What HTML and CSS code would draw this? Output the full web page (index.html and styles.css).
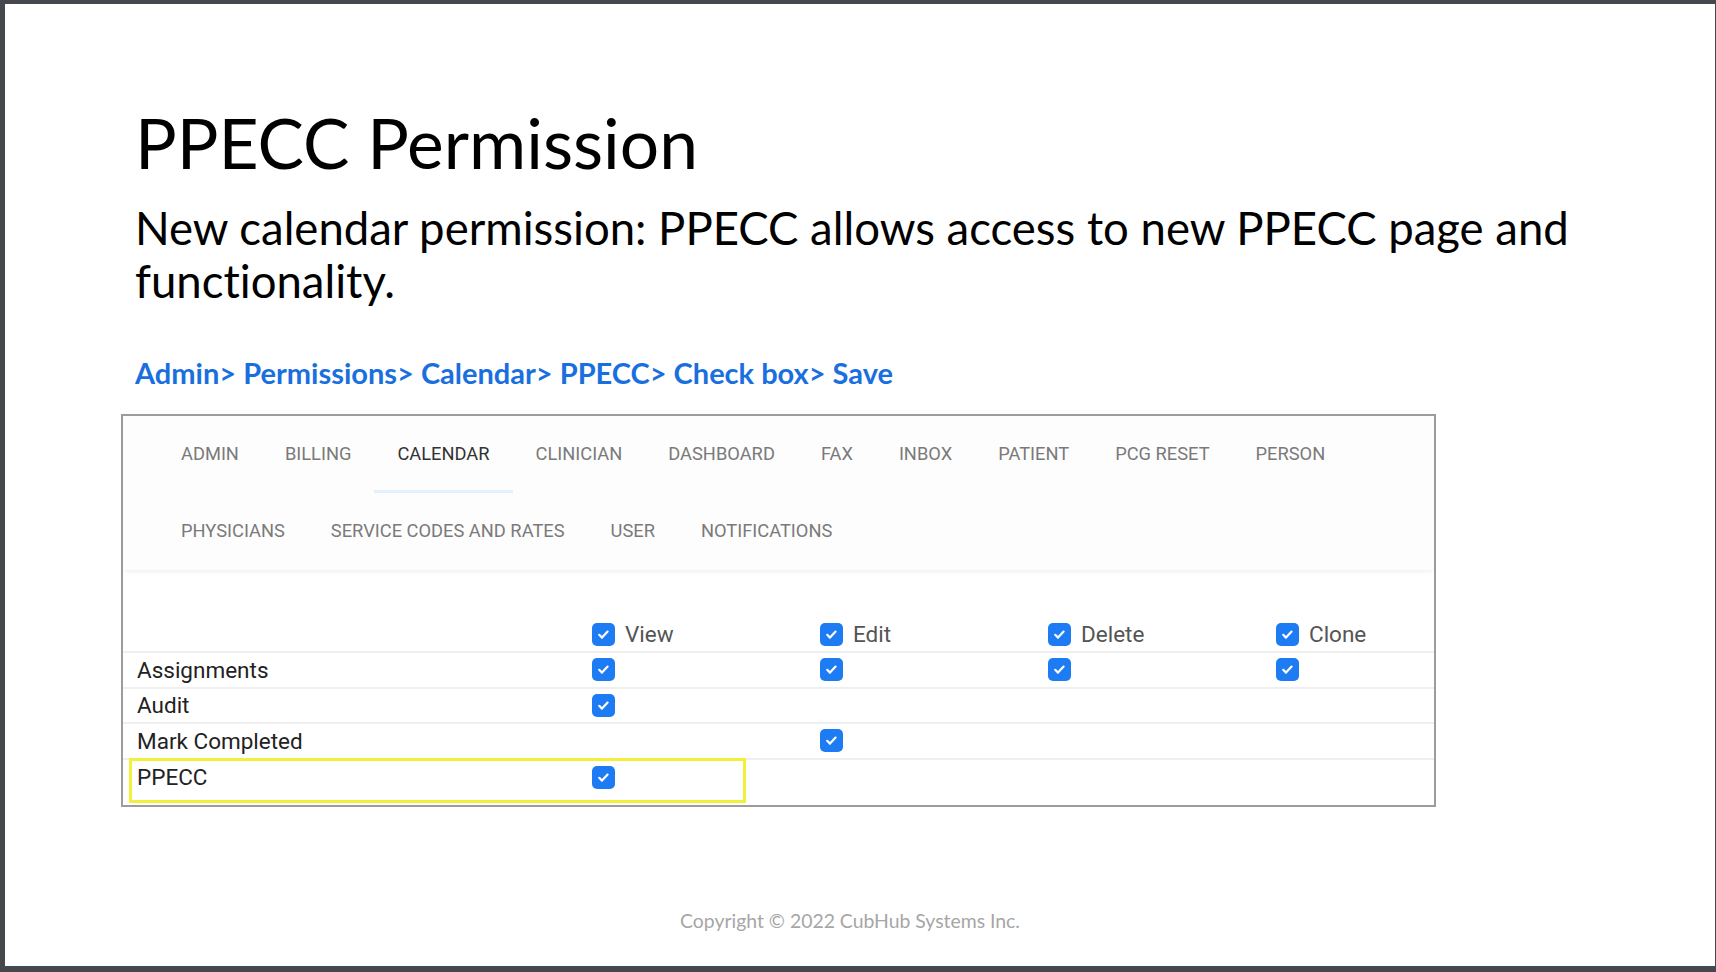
FILE: index.html
```html
<!DOCTYPE html>
<html lang="en">
<head>
<meta charset="utf-8">
<title>PPECC Permission</title>
<link rel="stylesheet" href="styles.css">
</head>
<body>
<div class="frame">
  <div class="slide">
    <h1 class="title">PPECC Permission</h1>
    <p class="subtitle">New calendar permission: PPECC allows access to new PPECC page and<br>functionality.</p>
    <p class="crumbs">Admin&gt; Permissions&gt; Calendar&gt; PPECC&gt; Check box&gt; Save</p>

    <div class="panel">
      <nav class="tabs">
        <span class="tab">ADMIN</span>
        <span class="tab">BILLING</span>
        <span class="tab active">CALENDAR</span>
        <span class="tab">CLINICIAN</span>
        <span class="tab">DASHBOARD</span>
        <span class="tab">FAX</span>
        <span class="tab">INBOX</span>
        <span class="tab">PATIENT</span>
        <span class="tab">PCG RESET</span>
        <span class="tab">PERSON</span>
        <span class="tab">PHYSICIANS</span>
        <span class="tab">SERVICE CODES AND RATES</span>
        <span class="tab">USER</span>
        <span class="tab">NOTIFICATIONS</span>
      </nav>

      <div class="table">
        <div class="row head">
          <span class="label"></span>
          <span class="cell"><svg class="cb" viewBox="0 0 23 23"><rect width="23" height="23" rx="5"/><path d="M7.2 11.8 L10 14.6 L15.6 8.6"/></svg><span class="hlabel">View</span></span>
          <span class="cell"><svg class="cb" viewBox="0 0 23 23"><rect width="23" height="23" rx="5"/><path d="M7.2 11.8 L10 14.6 L15.6 8.6"/></svg><span class="hlabel">Edit</span></span>
          <span class="cell"><svg class="cb" viewBox="0 0 23 23"><rect width="23" height="23" rx="5"/><path d="M7.2 11.8 L10 14.6 L15.6 8.6"/></svg><span class="hlabel">Delete</span></span>
          <span class="cell"><svg class="cb" viewBox="0 0 23 23"><rect width="23" height="23" rx="5"/><path d="M7.2 11.8 L10 14.6 L15.6 8.6"/></svg><span class="hlabel">Clone</span></span>
        </div>
        <div class="row">
          <span class="label">Assignments</span>
          <span class="cell"><svg class="cb" viewBox="0 0 23 23"><rect width="23" height="23" rx="5"/><path d="M7.2 11.8 L10 14.6 L15.6 8.6"/></svg></span>
          <span class="cell"><svg class="cb" viewBox="0 0 23 23"><rect width="23" height="23" rx="5"/><path d="M7.2 11.8 L10 14.6 L15.6 8.6"/></svg></span>
          <span class="cell"><svg class="cb" viewBox="0 0 23 23"><rect width="23" height="23" rx="5"/><path d="M7.2 11.8 L10 14.6 L15.6 8.6"/></svg></span>
          <span class="cell"><svg class="cb" viewBox="0 0 23 23"><rect width="23" height="23" rx="5"/><path d="M7.2 11.8 L10 14.6 L15.6 8.6"/></svg></span>
        </div>
        <div class="row">
          <span class="label">Audit</span>
          <span class="cell"><svg class="cb" viewBox="0 0 23 23"><rect width="23" height="23" rx="5"/><path d="M7.2 11.8 L10 14.6 L15.6 8.6"/></svg></span>
          <span class="cell"></span>
          <span class="cell"></span>
          <span class="cell"></span>
        </div>
        <div class="row">
          <span class="label">Mark Completed</span>
          <span class="cell"></span>
          <span class="cell"><svg class="cb" viewBox="0 0 23 23"><rect width="23" height="23" rx="5"/><path d="M7.2 11.8 L10 14.6 L15.6 8.6"/></svg></span>
          <span class="cell"></span>
          <span class="cell"></span>
        </div>
        <div class="row last">
          <span class="label">PPECC</span>
          <span class="cell"><svg class="cb" viewBox="0 0 23 23"><rect width="23" height="23" rx="5"/><path d="M7.2 11.8 L10 14.6 L15.6 8.6"/></svg></span>
          <span class="cell"></span>
          <span class="cell"></span>
          <span class="cell"></span>
          <span class="highlight"></span>
        </div>
      </div>
    </div>

    <footer class="copyright">Copyright © 2022 CubHub Systems Inc.</footer>
  </div>
</div>
</body>
</html>
```

FILE: styles.css
```css
html, body {
  margin: 0;
  padding: 0;
  background: #45494d;
}

.frame {
  width: 1716px;
  height: 972px;
  box-sizing: border-box;
  padding: 4px 1px 6px 5px;
  background: #45494d;
}

.slide {
  height: 962px;
  background: #ffffff;
  box-sizing: border-box;
  padding: 95px 0 0 130px;
  display: flex;
  flex-direction: column;
  font-family: "Lato", "Open Sans", sans-serif;
  font-variant-ligatures: none;
  color: #000;
}

.title {
  margin: 0;
  font-weight: 400;
  font-size: 69.5px;
  line-height: 86px;
}

.subtitle {
  margin: 16px 0 0 0;
  font-size: 45.5px;
  line-height: 53px;
}

.crumbs {
  margin: 49px 0 0 0;
  font-weight: 700;
  font-size: 29px;
  line-height: 34px;
  color: #1a6fdf;
}

.panel {
  margin: 24px 0 0 -14px;
  width: 1315px;
  box-sizing: border-box;
  border: 2px solid #9c9c9c;
  font-family: "Roboto", "Liberation Sans", sans-serif;
  padding-bottom: 10px;
}

.tabs {
  display: flex;
  flex-wrap: wrap;
  padding: 0 0 0 35px;
  background: #fdfdfd;
  box-shadow: 0 3px 4px -1px rgba(0, 0, 0, 0.06);
  position: relative;
}

.tab {
  height: 77px;
  padding: 1px 23px 0 23px;
  display: flex;
  align-items: center;
  font-size: 18.3px;
  color: #7a7a7a;
  box-sizing: border-box;
  border-bottom: 3px solid transparent;
}

.tab.active {
  color: #333;
  border-bottom-color: #e4f0fc;
}

.table {
  display: flex;
  flex-direction: column;
}

.row {
  display: grid;
  grid-template-columns: 469px 228px 228px 228px 1fr;
  align-items: center;
  height: 35.5px;
  box-sizing: border-box;
  border-bottom: 2px solid #efefef;
  position: relative;
}

.row.head {
  height: 83px;
  align-items: end;
  padding-bottom: 4px;
}

.row.last {
  border-bottom: none;
  height: 35px;
}

.label {
  padding-left: 14px;
  font-size: 22.5px;
  color: #222;
}

.cell {
  display: flex;
  align-items: center;
  gap: 10px;
}

.hlabel {
  font-size: 22.5px;
  color: #555;
}

.cb {
  width: 23px;
  height: 23px;
  display: block;
}

.cb rect {
  fill: #1d7cf4;
}

.cb path {
  fill: none;
  stroke: #ffffff;
  stroke-width: 2.2;
  stroke-linecap: round;
  stroke-linejoin: round;
}

.highlight {
  position: absolute;
  left: 6px;
  top: -2px;
  width: 617px;
  height: 45px;
  box-sizing: border-box;
  border: 3px solid #f3f03a;
}

.copyright {
  margin-top: auto;
  margin-bottom: 34px;
  margin-left: -130px;
  padding-right: 20px;
  text-align: center;
  font-size: 19.4px;
  color: #a6a6a6;
}
```
